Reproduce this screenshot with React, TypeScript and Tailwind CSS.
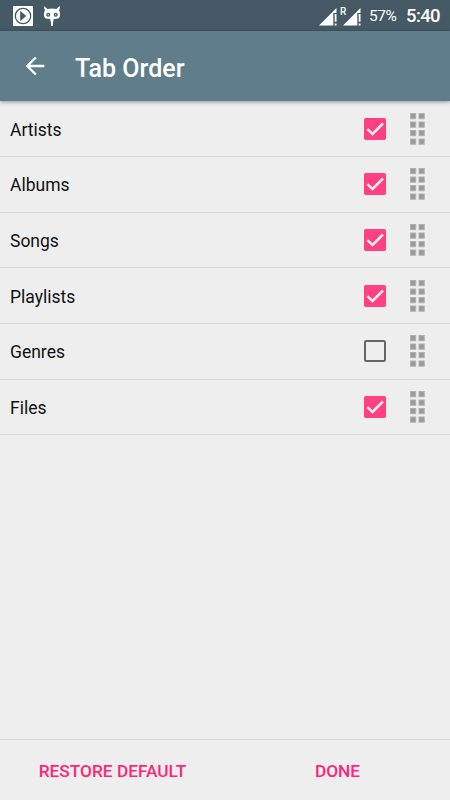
const tabs = [
  { name: "Artists", checked: true },
  { name: "Albums", checked: true },
  { name: "Songs", checked: true },
  { name: "Playlists", checked: true },
  { name: "Genres", checked: false },
  { name: "Files", checked: true },
];

const PlayerIcon = () => (
  <svg width="20" height="20" viewBox="0 0 20 20">
    <rect width="20" height="20" rx="0.8" fill="#fff" />
    <circle cx="10" cy="10" r="7.7" fill="none" stroke="#455a64" strokeWidth="1.3" />
    <path d="M7.2 4.8v10.4l6-5.2z" fill="#455a64" />
  </svg>
);

const CidIcon = () => (
  <svg width="18" height="20" viewBox="0 0 18 20" fill="#fff">
    <path d="M1.4 0.3 4.4 3Q9 2 13.4 3L16.400 0.300l.6.5-.9 3.600q1 1.500 1 4.300 0 3.600-3.500 4.100-4.600.6-9.200 0Q.9 12.300.9 8.700.9 5.900 1.900 4.400L.9.800z" />
    <circle cx="5.200" cy="8.700" r="2" fill="#455a64" />
    <circle cx="12.700" cy="8.700" r="2" fill="#455a64" />
    <circle cx="5.200" cy="8.700" r="0.600" />
    <circle cx="12.700" cy="8.700" r="0.600" />
    <path d="M7.400 12.500h3.100v3H9.900v4.500H8v-4.500h-.6z" />
  </svg>
);

const SignalIcon = () => (
  <svg width="18" height="18" viewBox="0 0 18 18" fill="#fff">
    <path d="M0 17.500 17.500 0v5h-3.200v12.500z" />
    <path d="M15.700 6h1.800v7.700h-1.800zM15.700 15.500h1.800v2h-1.800z" />
  </svg>
);

const StatusBar = () => (
  <div className="relative flex h-[31px] items-center bg-[#455a64] text-white">
    <div className="ml-[13px]">
      <PlayerIcon />
    </div>
    <div className="ml-[10px]">
      <CidIcon />
    </div>
    <div className="mt-[2px] ml-auto flex gap-[6px]">
      <SignalIcon />
      <SignalIcon />
    </div>
    <span className="absolute top-[6px] left-[340px] text-[10px] leading-[11px] font-medium">R</span>
    <span className="ml-[8px] w-[28px] pt-[2px] text-[15.500px] tracking-[-0.400px]">57%</span>
    <span className="mr-[10px] ml-[9px] w-[34px] pt-[3px] text-[18.500px] font-medium tracking-[-0.600px]">5:40</span>
  </div>
);

const Toolbar = () => (
  <div className="relative z-10 flex h-[70px] items-center bg-[#607d8b] text-white shadow-[0_1px_4px_rgba(0,0,0,0.4)]">
    <svg className="ml-[21px]" width="28" height="28" viewBox="0 0 24 24" fill="#fff">
      <path d="M20 11H7.830l5.590-5.590L12 4l-8 8 8 8 1.410-1.410L7.830 13H20v-2z" />
    </svg>
    <h1 className="ml-[26px] pt-[5px] text-[25px] leading-8 font-medium">Tab Order</h1>
  </div>
);

const Checkbox = ({ checked = false }) => (
  <svg width="24" height="24" viewBox="0 0 24 24">
    {checked ? (
      <>
        <rect x="1" y="1" width="22" height="22" rx="1.800" fill="#ff4081" />
        <path d="M4.300 12.200 9.500 17 20 6.500" fill="none" stroke="#eee" strokeWidth="2.500" />
      </>
    ) : (
      <rect x="2" y="2" width="20" height="20" rx="1.300" fill="none" stroke="#656565" strokeWidth="2" />
    )}
  </svg>
);

const DragHandle = () => (
  <svg width="15" height="32" viewBox="0 0 15 32">
    {[0.5, 9].map((x) =>
      [0.5, 9, 17.5, 26].map((y) => (
        <rect key={`${x}-${y}`} x={x} y={y} width="5.200" height="5.200" fill="#999" stroke="#b0b0b0" />
      ))
    )}
  </svg>
);

const TabRow = ({ name = "", checked = false }) => (
  <div className="flex h-[55.670px] items-center border-b border-[#d9d9d9] pr-[25px] pl-[10px]">
    <span className="grow pt-[2px] text-[17.500px] text-[#111]">{name}</span>
    <Checkbox checked={checked} />
    <div className="ml-[23px]">
      <DragHandle />
    </div>
  </div>
);

export default function App() {
  return (
    <div className="flex h-[800px] w-[450px] flex-col overflow-hidden bg-[#eee] font-['Roboto',sans-serif]">
      <StatusBar />
      <Toolbar />
      <div className="grow pt-[0.400px]">
        {tabs.map((tab) => (
          <TabRow key={tab.name} name={tab.name} checked={tab.checked} />
        ))}
      </div>
      <div className="grid h-[61px] grid-cols-2 border-t border-[#d6d6d6] pt-[3px] text-[17.300px] font-medium text-[#ff267a]">
        <button>RESTORE DEFAULT</button>
        <button>DONE</button>
      </div>
    </div>
  );
}
